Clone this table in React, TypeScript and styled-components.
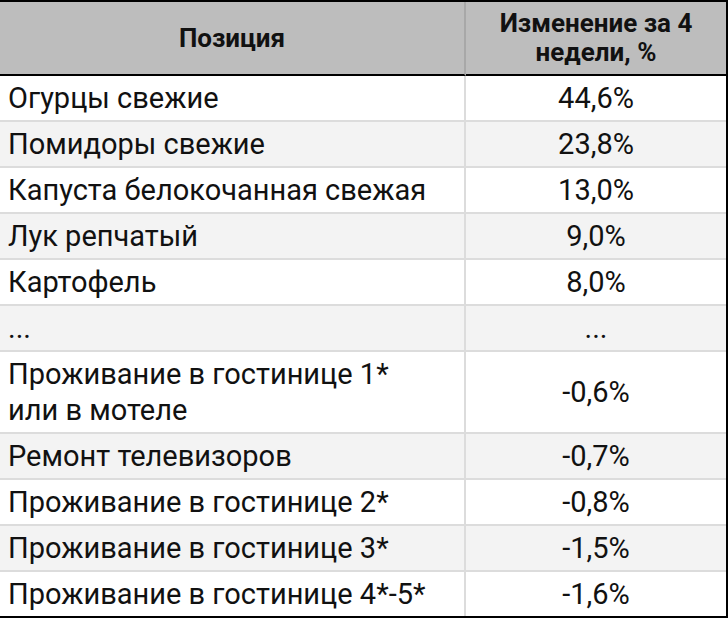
import React from 'react'
import styled, { createGlobalStyle } from 'styled-components'

const GlobalStyle = createGlobalStyle`
	html, body {
		margin: 0;
		padding: 0;
		background: #ffffff;
	}
	body {
		font-family: Roboto, 'Liberation Sans', Arial, sans-serif;
		color: #111111;
	}
`

type Row = {
	name: string
	change: string
}

const rows: Row[] = [
	{ name: 'Огурцы свежие', change: '44,6%' },
	{ name: 'Помидоры свежие', change: '23,8%' },
	{ name: 'Капуста белокочанная свежая', change: '13,0%' },
	{ name: 'Лук репчатый', change: '9,0%' },
	{ name: 'Картофель', change: '8,0%' },
	{ name: '...', change: '...' },
	{ name: 'Проживание в гостинице 1*\nили в мотеле', change: '-0,6%' },
	{ name: 'Ремонт телевизоров', change: '-0,7%' },
	{ name: 'Проживание в гостинице 2*', change: '-0,8%' },
	{ name: 'Проживание в гостинице 3*', change: '-1,5%' },
	{ name: 'Проживание в гостинице 4*-5*', change: '-1,6%' },
]

export default function App() {
	return (
		<>
			<GlobalStyle />
			<Table>
				<thead>
					<tr>
						<HeadCell>Позиция</HeadCell>
						<HeadCell>
							Изменение за 4
							<br />
							недели, %
						</HeadCell>
					</tr>
				</thead>
				<tbody>
					{rows.map((row, index) => (
						<BodyRow key={index} striped={index % 2 === 1} last={index === rows.length - 1}>
							<NameCell>{row.name}</NameCell>
							<ValueCell>{row.change}</ValueCell>
						</BodyRow>
					))}
				</tbody>
			</Table>
		</>
	)
}

const Table = styled.table`
	width: 728px;
	border-collapse: separate;
	border-spacing: 0;
	border-top: 2px solid #000;
	border-right: 2px solid #000;
	border-bottom: 2px solid #000;
	box-sizing: border-box;
	table-layout: fixed;
`

const HeadCell = styled.th`
	background: #bdbdbd;
	font-weight: 700;
	font-size: 26px;
	line-height: 29px;
	height: 74px;
	padding: 0 8px;
	box-sizing: border-box;
	text-align: center;
	vertical-align: middle;
	border-bottom: 2px solid #000;

	&:first-child {
		width: 466px;
		border-right: 2px solid #a8a8a8;
	}
`

const BodyRow = styled.tr<{ striped: boolean; last: boolean }>`
	background: ${props => (props.striped ? '#f3f3f3' : '#ffffff')};

	td {
		border-bottom: ${props => (props.last ? 'none' : '2px solid #dcdcdc')};
	}
`

const NameCell = styled.td`
	font-size: 29px;
	line-height: 36px;
	padding: 4px 8px;
	text-align: left;
	vertical-align: middle;
	white-space: pre-line;
	border-right: 2px solid #dcdcdc;
`

const ValueCell = styled.td`
	font-size: 29px;
	line-height: 36px;
	padding: 4px 8px;
	text-align: center;
	vertical-align: middle;
`
